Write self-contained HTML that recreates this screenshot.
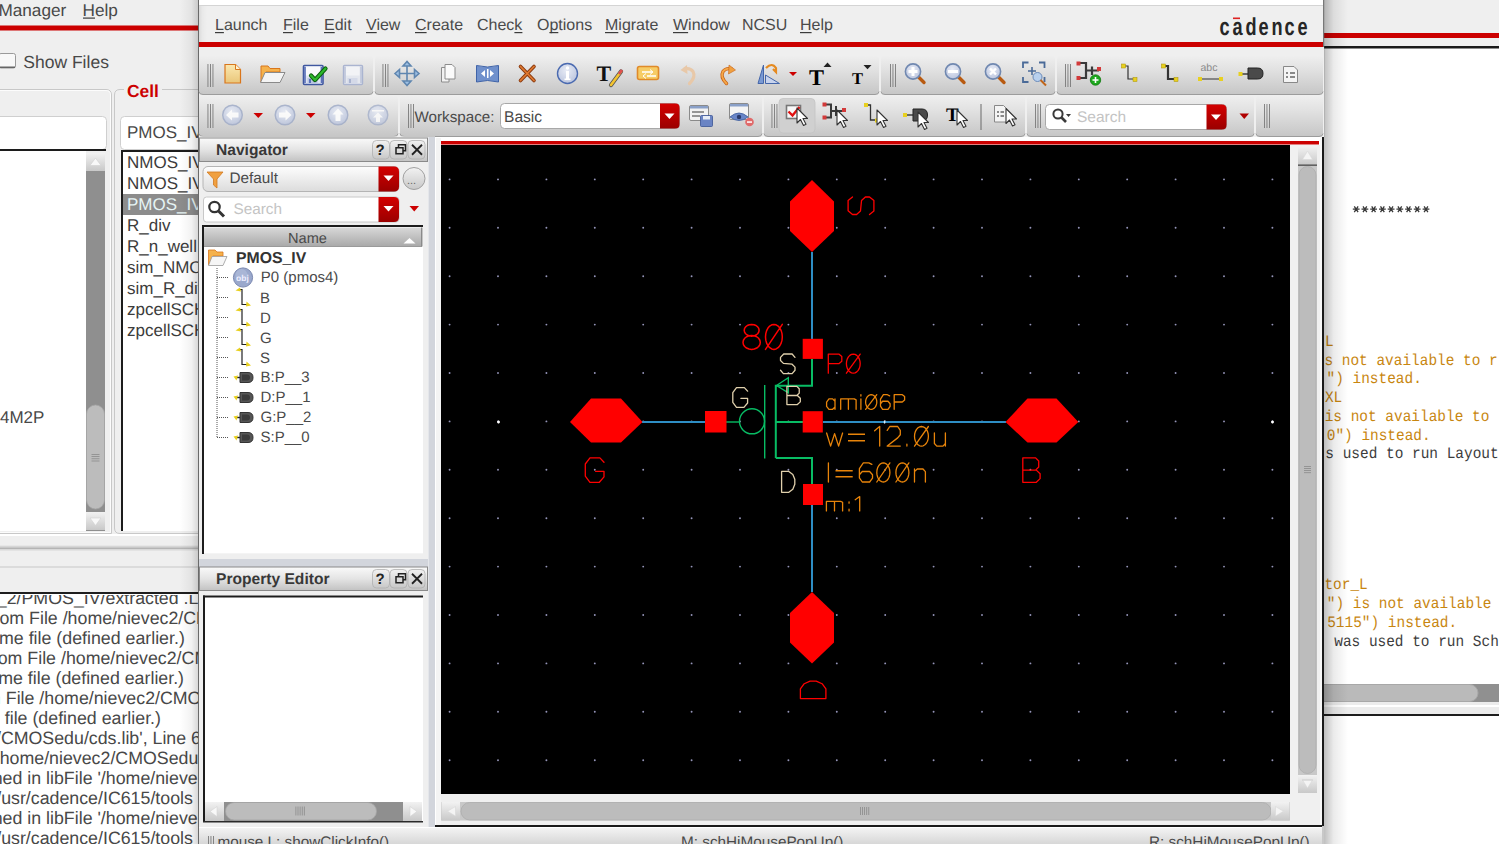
<!DOCTYPE html>
<html><head><meta charset="utf-8"><title>Virtuoso Schematic Editor</title>
<style>html,body{margin:0;padding:0;background:#efefef;overflow:hidden;width:1499px;height:844px}
svg{display:block}</style></head>
<body><svg width="1499" height="844" viewBox="0 0 1499 844" text-rendering="geometricPrecision">
<defs>
<linearGradient id="tb" x1="0" y1="0" x2="0" y2="1">
 <stop offset="0" stop-color="#efefef"/><stop offset="0.35" stop-color="#e2e2e2"/><stop offset="1" stop-color="#c6c6c6"/>
</linearGradient>
<linearGradient id="title" x1="0" y1="0" x2="0" y2="1">
 <stop offset="0" stop-color="#fafafa"/><stop offset="0.5" stop-color="#e4e4e4"/><stop offset="1" stop-color="#c2c2c2"/>
</linearGradient>
<linearGradient id="hdr" x1="0" y1="0" x2="0" y2="1">
 <stop offset="0" stop-color="#d8d8d8"/><stop offset="1" stop-color="#a9a9a9"/>
</linearGradient>
<linearGradient id="redbtn" x1="0" y1="0" x2="0" y2="1">
 <stop offset="0" stop-color="#d40000"/><stop offset="1" stop-color="#9a0000"/>
</linearGradient>
<linearGradient id="combo" x1="0" y1="0" x2="0" y2="1">
 <stop offset="0" stop-color="#fdfdfd"/><stop offset="1" stop-color="#dcdcdc"/>
</linearGradient>
<linearGradient id="status" x1="0" y1="0" x2="0" y2="1">
 <stop offset="0" stop-color="#f4f4f4"/><stop offset="1" stop-color="#d6d6d6"/>
</linearGradient>
<linearGradient id="shadowL" x1="0" y1="0" x2="1" y2="0">
 <stop offset="0" stop-color="#000" stop-opacity="0"/><stop offset="0.6" stop-color="#000" stop-opacity="0.05"/><stop offset="1" stop-color="#000" stop-opacity="0.17"/>
</linearGradient>
<linearGradient id="shadowR" x1="0" y1="0" x2="1" y2="0">
 <stop offset="0" stop-color="#000" stop-opacity="0.25"/><stop offset="0.4" stop-color="#000" stop-opacity="0.08"/><stop offset="1" stop-color="#000" stop-opacity="0"/>
</linearGradient>
<linearGradient id="btnv" x1="0" y1="0" x2="0" y2="1">
 <stop offset="0" stop-color="#f2f2f2"/><stop offset="1" stop-color="#c8c8c8"/>
</linearGradient>
<linearGradient id="thumbh" x1="0" y1="0" x2="0" y2="1">
 <stop offset="0" stop-color="#c4c4c4"/><stop offset="1" stop-color="#b4b4b4"/>
</linearGradient>
<radialGradient id="bluecirc" cx="0.45" cy="0.35" r="0.7">
 <stop offset="0" stop-color="#e8ecf6"/><stop offset="1" stop-color="#b8c2dc"/>
</radialGradient>
<linearGradient id="doc" x1="0" y1="0" x2="0" y2="1">
 <stop offset="0" stop-color="#fbe8b0"/><stop offset="1" stop-color="#e9c67a"/>
</linearGradient>
</defs>
<rect x="1324" y="0" width="175" height="844" fill="#ffffff" />
<rect x="1324" y="0" width="175" height="46" fill="#efefef" />
<rect x="1324" y="33" width="175" height="5" fill="#cc0000" />
<rect x="1324" y="46" width="175" height="2.5" fill="#1a1a1a" />
<path d="M1352.8 209.2 H1359.6 M1354.3 206.29999999999998 L1358.1 212.1 M1358.1 206.29999999999998 L1354.3 212.1 M1361.5 209.2 H1368.3 M1363.0 206.29999999999998 L1366.8 212.1 M1366.8 206.29999999999998 L1363.0 212.1 M1370.2 209.2 H1377.0 M1371.7 206.29999999999998 L1375.5 212.1 M1375.5 206.29999999999998 L1371.7 212.1 M1379.0 209.2 H1385.8 M1380.5 206.29999999999998 L1384.3 212.1 M1384.3 206.29999999999998 L1380.5 212.1 M1387.7 209.2 H1394.5 M1389.2 206.29999999999998 L1393.0 212.1 M1393.0 206.29999999999998 L1389.2 212.1 M1396.4 209.2 H1403.2 M1397.9 206.29999999999998 L1401.7 212.1 M1401.7 206.29999999999998 L1397.9 212.1 M1405.1 209.2 H1411.9 M1406.6 206.29999999999998 L1410.4 212.1 M1410.4 206.29999999999998 L1406.6 212.1 M1413.8 209.2 H1420.6 M1415.3 206.29999999999998 L1419.1 212.1 M1419.1 206.29999999999998 L1415.3 212.1 M1422.6 209.2 H1429.4 M1424.1 206.29999999999998 L1427.9 212.1 M1427.9 206.29999999999998 L1424.1 212.1" stroke="#3a3a3a" stroke-width="1.3"/>
<text transform="translate(1324.90 345.8) scale(1 1.1)" font-size="14.45" fill="#c8860f" font-family='"Liberation Mono", monospace'>L</text>
<text transform="translate(1324.46 364.6) scale(1 1.1)" font-size="14.45" fill="#c8860f" font-family='"Liberation Mono", monospace'>s not available to r</text>
<text transform="translate(1326.49 383.3) scale(1 1.1)" font-size="14.45" fill="#c8860f" font-family='"Liberation Mono", monospace'>") instead.</text>
<text transform="translate(1324.90 402) scale(1 1.1)" font-size="14.45" fill="#c8860f" font-family='"Liberation Mono", monospace'>XL</text>
<text transform="translate(1324.69 420.8) scale(1 1.1)" font-size="14.45" fill="#c8860f" font-family='"Liberation Mono", monospace'>is not available to</text>
<text transform="translate(1326.72 439.6) scale(1 1.1)" font-size="14.45" fill="#c8860f" font-family='"Liberation Mono", monospace'>0") instead.</text>
<text transform="translate(1325.36 458.4) scale(1 1.1)" font-size="14.45" fill="#3c3c3c" font-family='"Liberation Mono", monospace'>s used to run Layout</text>
<text transform="translate(1324.40 589.4) scale(1 1.1)" font-size="14.45" fill="#c8860f" font-family='"Liberation Mono", monospace'>tor_L</text>
<text transform="translate(1326.79 608.3) scale(1 1.1)" font-size="14.45" fill="#c8860f" font-family='"Liberation Mono", monospace'>") is not available</text>
<text transform="translate(1327.21 626.7) scale(1 1.1)" font-size="14.45" fill="#c8860f" font-family='"Liberation Mono", monospace'>5115") instead.</text>
<text transform="translate(1334.22 645.7) scale(1 1.1)" font-size="14.45" fill="#3c3c3c" font-family='"Liberation Mono", monospace'>was used to run Sch</text>
<rect x="1324" y="684" width="175" height="18" fill="#909090" />
<rect x="1310" y="684.5" width="168" height="17" rx="8.5" fill="#bababa" stroke="#a8a8a8" stroke-width="1"/>
<rect x="1324" y="702" width="175" height="12" fill="#ececec" />
<rect x="1324" y="705" width="175" height="2" fill="#ffffff" />
<rect x="1324" y="714" width="175" height="2" fill="#1e1e1e" />
<rect x="1324" y="716" width="175" height="128" fill="#ffffff" />
<rect x="1324" y="0" width="24" height="844" fill="url(#shadowR)"/>
<rect x="0" y="0" width="199" height="844" fill="#efefef" />
<text x="-1.6" y="16" font-size="17.2" fill="#484848" font-weight="normal" font-family='"Liberation Sans", sans-serif' >Manager</text>
<text x="82.5" y="16" font-size="17.2" fill="#484848" font-weight="normal" font-family='"Liberation Sans", sans-serif' >Help</text>
<rect x="83" y="17.5" width="12" height="1.2" fill="#3c3c3c" />
<rect x="0" y="25.5" width="199" height="5" fill="#cc0000" />
<rect x="-1" y="53.5" width="16.5" height="14.5" rx="2" fill="#f8f8f8" stroke="#9a9a9a" stroke-width="1"/>
<rect x="0" y="66.5" width="15" height="1.5" fill="#666" />
<text x="23.3" y="68" font-size="17.5" fill="#484848" font-weight="normal" font-family='"Liberation Sans", sans-serif' >Show Files</text>
<path d="M0 89.5 H106 Q111.5 89.5 111.5 95 V533.5 H0" fill="none" stroke="#c8c8c8" stroke-width="1"/>
<path d="M0 90.5 H106 Q110.5 90.5 110.5 95 V532.5 H0" fill="none" stroke="#ffffff" stroke-width="0.8"/>
<path d="M199 533.5 H120 Q114.5 533.5 114.5 528 V95 Q114.5 89.5 120 89.5 H124" fill="none" stroke="#c8c8c8" stroke-width="1"/>
<rect x="162" y="89" width="40" height="1" fill="#c8c8c8" />
<text x="127" y="96.5" font-size="17.4" fill="#cc0000" font-weight="bold" font-family='"Liberation Sans", sans-serif' >Cell</text>
<rect x="-10" y="116.5" width="116.5" height="33" rx="4" fill="#ffffff" stroke="#cfcfcf" stroke-width="1"/>
<rect x="0" y="149" width="106" height="2" fill="#1c1c1c" />
<rect x="0" y="151" width="86" height="380" fill="#ffffff" />
<rect x="86" y="153" width="19" height="378" fill="#8f8f8f" />
<rect x="86" y="153" width="19" height="18" fill="url(#btnv)"/>
<path d="M90 165.5 L95.5 158 L101 165.5 Z" fill="#f8f8f8" stroke="#d0d0d0" stroke-width="0.6"/>
<rect x="86.5" y="405" width="18" height="104" rx="9" fill="#bcbcbc" stroke="#a4a4a4" stroke-width="0.8"/>
<rect x="91.5" y="454.0" width="8" height="0.8" fill="#8a8a8a" />
<rect x="91.5" y="456.2" width="8" height="0.8" fill="#8a8a8a" />
<rect x="91.5" y="458.4" width="8" height="0.8" fill="#8a8a8a" />
<rect x="91.5" y="460.6" width="8" height="0.8" fill="#8a8a8a" />
<rect x="86" y="512" width="19" height="18" fill="url(#btnv)"/>
<path d="M90 518 L95.5 525.5 L101 518 Z" fill="#f8f8f8" stroke="#d0d0d0" stroke-width="0.6"/>
<text x="0" y="423" font-size="17" fill="#484848" font-weight="normal" font-family='"Liberation Sans", sans-serif' >4M2P</text>
<rect x="120.5" y="116.5" width="100" height="33" rx="4" fill="#ffffff" stroke="#cfcfcf" stroke-width="1"/>
<text x="127" y="137.5" font-size="17" fill="#484848" font-weight="normal" font-family='"Liberation Sans", sans-serif' >PMOS_IV</text>
<rect x="121" y="150" width="80" height="381" fill="#ffffff" />
<rect x="121" y="150" width="80" height="2" fill="#1c1c1c" />
<rect x="121" y="150" width="2" height="381" fill="#1c1c1c" />
<rect x="123" y="194" width="78" height="21" fill="#8c8c8c" />
<text x="127" y="167.5" font-size="17" fill="#3c3c3c" font-weight="normal" font-family='"Liberation Sans", sans-serif' >NMOS_IV</text>
<text x="127" y="188.5" font-size="17" fill="#3c3c3c" font-weight="normal" font-family='"Liberation Sans", sans-serif' >NMOS_IV</text>
<text x="127" y="209.5" font-size="17" fill="#e6f4f4" font-weight="normal" font-family='"Liberation Sans", sans-serif' >PMOS_IV</text>
<text x="127" y="230.5" font-size="17" fill="#3c3c3c" font-weight="normal" font-family='"Liberation Sans", sans-serif' >R_div</text>
<text x="127" y="251.5" font-size="17" fill="#3c3c3c" font-weight="normal" font-family='"Liberation Sans", sans-serif' >R_n_well</text>
<text x="127" y="272.5" font-size="17" fill="#3c3c3c" font-weight="normal" font-family='"Liberation Sans", sans-serif' >sim_NMOS</text>
<text x="127" y="293.5" font-size="17" fill="#3c3c3c" font-weight="normal" font-family='"Liberation Sans", sans-serif' >sim_R_div</text>
<text x="127" y="314.5" font-size="17" fill="#3c3c3c" font-weight="normal" font-family='"Liberation Sans", sans-serif' >zpcellSCH</text>
<text x="127" y="335.5" font-size="17" fill="#3c3c3c" font-weight="normal" font-family='"Liberation Sans", sans-serif' >zpcellSCH</text>
<rect x="0" y="534" width="199" height="2" fill="#ffffff" />
<rect x="0" y="545.5" width="199" height="1" fill="#e0e0e0" />
<rect x="0" y="546.5" width="199" height="1.2" fill="#c6c6c6" />
<rect x="0" y="547.7" width="199" height="1.6" fill="#b4b4b4" />
<rect x="0" y="549.3" width="199" height="1.2" fill="#d8d8d8" />
<rect x="0" y="566.5" width="199" height="1" fill="#c8c8c8" />
<rect x="0" y="592" width="199" height="2" fill="#1e1e1e" />
<rect x="0" y="594" width="199" height="250" fill="#ffffff" />
<clipPath id="logclip"><rect x="0" y="595" width="199" height="250"/></clipPath><g clip-path="url(#logclip)">
<text x="-13.1" y="604" font-size="17.8" fill="#484848" font-weight="normal" font-family='"Liberation Sans", sans-serif' >e_2/PMOS_IV/extracted .L</text>
<text x="-11.45" y="624" font-size="17.8" fill="#484848" font-weight="normal" font-family='"Liberation Sans", sans-serif' >from File /home/nievec2/CMOSedu</text>
<text x="-19.77" y="644" font-size="17.8" fill="#484848" font-weight="normal" font-family='"Liberation Sans", sans-serif' >same file (defined earlier.)</text>
<text x="-13.15" y="664" font-size="17.8" fill="#484848" font-weight="normal" font-family='"Liberation Sans", sans-serif' >from File /home/nievec2/CMOSedu</text>
<text x="-20.57" y="684" font-size="17.8" fill="#484848" font-weight="normal" font-family='"Liberation Sans", sans-serif' >same file (defined earlier.)</text>
<text x="-23.87" y="704" font-size="17.8" fill="#484848" font-weight="normal" font-family='"Liberation Sans", sans-serif' >om File /home/nievec2/CMOSedu</text>
<text x="-24.87" y="724" font-size="17.8" fill="#484848" font-weight="normal" font-family='"Liberation Sans", sans-serif' >me file (defined earlier.)</text>
<text x="-23.84" y="744" font-size="17.8" fill="#484848" font-weight="normal" font-family='"Liberation Sans", sans-serif' >du/CMOSedu/cds.lib', Line 6</text>
<text x="-5.25" y="764" font-size="17.8" fill="#484848" font-weight="normal" font-family='"Liberation Sans", sans-serif' >/home/nievec2/CMOSedu</text>
<text x="-26.1" y="784" font-size="17.8" fill="#484848" font-weight="normal" font-family='"Liberation Sans", sans-serif' >efined in libFile '/home/nievec2</text>
<text x="-3.82" y="804" font-size="17.8" fill="#484848" font-weight="normal" font-family='"Liberation Sans", sans-serif' >/usr/cadence/IC615/tools</text>
<text x="-26.1" y="824" font-size="17.8" fill="#484848" font-weight="normal" font-family='"Liberation Sans", sans-serif' >efined in libFile '/home/nievec2</text>
<text x="-3.82" y="844" font-size="17.8" fill="#484848" font-weight="normal" font-family='"Liberation Sans", sans-serif' >/usr/cadence/IC615/tools</text>
</g>
<rect x="180" y="0" width="19" height="844" fill="url(#shadowL)"/>
<rect x="198" y="0" width="1126" height="844" fill="#efefef" />
<rect x="198" y="0" width="1" height="844" fill="#6a6a6a" />
<rect x="199" y="0" width="1125" height="5" fill="#ffffff" />
<rect x="199" y="5" width="1125" height="1" fill="#d4d4d4" />
<rect x="199" y="6" width="8" height="36" fill="url(#shadowR)" opacity="0.35"/>
<text x="215" y="30.4" font-size="16" fill="#4a4a4a" font-weight="normal" font-family='"Liberation Sans", sans-serif' >Launch</text>
<rect x="215.0" y="32" width="8.9" height="1.2" fill="#3c3c3c" />
<text x="283" y="30.4" font-size="16" fill="#4a4a4a" font-weight="normal" font-family='"Liberation Sans", sans-serif' >File</text>
<rect x="283.0" y="32" width="9.8" height="1.2" fill="#3c3c3c" />
<text x="324" y="30.4" font-size="16" fill="#4a4a4a" font-weight="normal" font-family='"Liberation Sans", sans-serif' >Edit</text>
<rect x="324.0" y="32" width="10.7" height="1.2" fill="#3c3c3c" />
<text x="366" y="30.4" font-size="16" fill="#4a4a4a" font-weight="normal" font-family='"Liberation Sans", sans-serif' >View</text>
<rect x="366.0" y="32" width="10.7" height="1.2" fill="#3c3c3c" />
<text x="415" y="30.4" font-size="16" fill="#4a4a4a" font-weight="normal" font-family='"Liberation Sans", sans-serif' >Create</text>
<rect x="415.0" y="32" width="11.6" height="1.2" fill="#3c3c3c" />
<text x="477" y="30.4" font-size="16" fill="#4a4a4a" font-weight="normal" font-family='"Liberation Sans", sans-serif' >Check</text>
<rect x="514.4" y="32" width="8.0" height="1.2" fill="#3c3c3c" />
<text x="537" y="30.4" font-size="16" fill="#4a4a4a" font-weight="normal" font-family='"Liberation Sans", sans-serif' >Options</text>
<rect x="549.4" y="32" width="8.9" height="1.2" fill="#3c3c3c" />
<text x="605" y="30.4" font-size="16" fill="#4a4a4a" font-weight="normal" font-family='"Liberation Sans", sans-serif' >Migrate</text>
<rect x="605.0" y="32" width="13.3" height="1.2" fill="#3c3c3c" />
<text x="673" y="30.4" font-size="16" fill="#4a4a4a" font-weight="normal" font-family='"Liberation Sans", sans-serif' >Window</text>
<rect x="673.0" y="32" width="15.1" height="1.2" fill="#3c3c3c" />
<text x="742" y="30.4" font-size="16" fill="#4a4a4a" font-weight="normal" font-family='"Liberation Sans", sans-serif' >NCSU</text>
<text x="800" y="30.4" font-size="16" fill="#4a4a4a" font-weight="normal" font-family='"Liberation Sans", sans-serif' >Help</text>
<rect x="800.0" y="32" width="11.6" height="1.2" fill="#3c3c3c" />
<text x="1647.97 1665.54 1683.11 1700.68 1718.24 1735.81 1753.38" y="34.5" font-size="24.5" font-weight="bold" fill="#262626" font-family='"Liberation Sans", sans-serif' transform="scale(0.74 1)">cadence</text>
<rect x="1233" y="17.5" width="7" height="1.6" fill="#dd2222" />
<rect x="199" y="42" width="1125" height="5" fill="#cc0000" />
<rect x="1322" y="137" width="2" height="707" fill="#1a1a1a" />
<rect x="1323" y="0" width="1.2" height="137" fill="#787878" />
<rect x="199" y="47" width="1125" height="90" fill="#efefef" />
<rect x="199" y="55.5" width="174" height="39.0" rx="4" fill="url(#tb)"/>
<path d="M199 91.5 Q199 94.5 203 94.5 H369 Q373 94.5 373 91.5" fill="none" stroke="#9c9c9c" stroke-width="1"/>
<rect x="375" y="55.5" width="504" height="39.0" rx="4" fill="url(#tb)"/>
<path d="M375 91.5 Q375 94.5 379 94.5 H875 Q879 94.5 879 91.5" fill="none" stroke="#9c9c9c" stroke-width="1"/>
<rect x="881" y="55.5" width="174" height="39.0" rx="4" fill="url(#tb)"/>
<path d="M881 91.5 Q881 94.5 885 94.5 H1051 Q1055 94.5 1055 91.5" fill="none" stroke="#9c9c9c" stroke-width="1"/>
<rect x="1057" y="55.5" width="266" height="39.0" rx="4" fill="url(#tb)"/>
<path d="M1057 91.5 Q1057 94.5 1061 94.5 H1319 Q1323 94.5 1323 91.5" fill="none" stroke="#9c9c9c" stroke-width="1"/>
<rect x="207.5" y="64" width="0.9" height="23" fill="#7a7a7a" />
<rect x="210.0" y="64" width="0.9" height="23" fill="#7a7a7a" />
<rect x="212.5" y="64" width="0.9" height="23" fill="#7a7a7a" />
<rect x="382.5" y="64" width="0.9" height="23" fill="#7a7a7a" />
<rect x="385.0" y="64" width="0.9" height="23" fill="#7a7a7a" />
<rect x="387.5" y="64" width="0.9" height="23" fill="#7a7a7a" />
<rect x="890.0" y="64" width="0.9" height="23" fill="#7a7a7a" />
<rect x="892.5" y="64" width="0.9" height="23" fill="#7a7a7a" />
<rect x="895.0" y="64" width="0.9" height="23" fill="#7a7a7a" />
<rect x="1065.0" y="64" width="0.9" height="23" fill="#7a7a7a" />
<rect x="1067.5" y="64" width="0.9" height="23" fill="#7a7a7a" />
<rect x="1070.0" y="64" width="0.9" height="23" fill="#7a7a7a" />
<rect x="199" y="95.5" width="199" height="41.0" rx="4" fill="url(#tb)"/>
<path d="M199 133.5 Q199 136.5 203 136.5 H394 Q398 136.5 398 133.5" fill="none" stroke="#9c9c9c" stroke-width="1"/>
<rect x="400" y="95.5" width="362" height="41.0" rx="4" fill="url(#tb)"/>
<path d="M400 133.5 Q400 136.5 404 136.5 H758 Q762 136.5 762 133.5" fill="none" stroke="#9c9c9c" stroke-width="1"/>
<rect x="764" y="95.5" width="261" height="41.0" rx="4" fill="url(#tb)"/>
<path d="M764 133.5 Q764 136.5 768 136.5 H1021 Q1025 136.5 1025 133.5" fill="none" stroke="#9c9c9c" stroke-width="1"/>
<rect x="1027" y="95.5" width="227" height="41.0" rx="4" fill="url(#tb)"/>
<path d="M1027 133.5 Q1027 136.5 1031 136.5 H1250 Q1254 136.5 1254 133.5" fill="none" stroke="#9c9c9c" stroke-width="1"/>
<rect x="1256" y="95.5" width="67" height="41.0" rx="4" fill="url(#tb)"/>
<path d="M1256 133.5 Q1256 136.5 1260 136.5 H1319 Q1323 136.5 1323 133.5" fill="none" stroke="#9c9c9c" stroke-width="1"/>
<rect x="207.5" y="104" width="0.9" height="24" fill="#7a7a7a" />
<rect x="210.0" y="104" width="0.9" height="24" fill="#7a7a7a" />
<rect x="212.5" y="104" width="0.9" height="24" fill="#7a7a7a" />
<rect x="408.0" y="104" width="0.9" height="24" fill="#7a7a7a" />
<rect x="410.5" y="104" width="0.9" height="24" fill="#7a7a7a" />
<rect x="413.0" y="104" width="0.9" height="24" fill="#7a7a7a" />
<rect x="771.5" y="104" width="0.9" height="24" fill="#7a7a7a" />
<rect x="774.0" y="104" width="0.9" height="24" fill="#7a7a7a" />
<rect x="776.5" y="104" width="0.9" height="24" fill="#7a7a7a" />
<rect x="1035.0" y="104" width="0.9" height="24" fill="#7a7a7a" />
<rect x="1037.5" y="104" width="0.9" height="24" fill="#7a7a7a" />
<rect x="1040.0" y="104" width="0.9" height="24" fill="#7a7a7a" />
<rect x="1264.0" y="104" width="0.9" height="24" fill="#7a7a7a" />
<rect x="1266.5" y="104" width="0.9" height="24" fill="#7a7a7a" />
<rect x="1269.0" y="104" width="0.9" height="24" fill="#7a7a7a" />
<path d="M225 64.5 H235.5 L240.5 69.5 V83 H225 Z" fill="url(#doc)" stroke="#d9761c" stroke-width="1.2"/><path d="M235.5 64.5 V69.5 H240.5" fill="#fff3d0" stroke="#d9761c" stroke-width="1"/>
<path d="M261 66 H268 L270 68.5 H280 V72 H266 L261 82 Z" fill="#f5b24c" stroke="#d9761c" stroke-width="1"/><path d="M265 72.5 H285 L280 82.5 H260.5 Z" fill="#f4f4f4" stroke="#8a8a8a" stroke-width="1"/>
<rect x="303.5" y="65.5" width="19.5" height="19" rx="1" fill="#dfe4f2" stroke="#3f57a0" stroke-width="1.6"/><rect x="306" y="66.5" width="14" height="9" fill="#f8f9fc"/><path d="M305 67 V83 M321.5 67 V83" stroke="#5a70b8" stroke-width="1.6"/><rect x="307.5" y="78" width="10" height="6" fill="#b8c4e2"/><rect x="309" y="79" width="2" height="4" fill="#5a70b8"/>
<path d="M311 75.5 L315 80 L325.5 68.5" fill="none" stroke="#0a5a0a" stroke-width="4.2" stroke-linecap="round" stroke-linejoin="round"/><path d="M311 75.5 L315 80 L325.5 68.5" fill="none" stroke="#2cb82c" stroke-width="2.4" stroke-linecap="round" stroke-linejoin="round"/>
<rect x="343.5" y="65.5" width="19" height="19" rx="1" fill="#e4e7ee" stroke="#aab4d0" stroke-width="1.4"/><rect x="346" y="66.5" width="13.5" height="9" fill="#f2f3f6"/><path d="M345 67 V83 M361 67 V83" stroke="#b8c0d8" stroke-width="1.4"/><rect x="347.5" y="78" width="10" height="6" fill="#d4d9e8"/><rect x="349" y="79" width="2" height="4" fill="#aab4d0"/>
<g stroke="#5f86b0" stroke-width="1.6" fill="#9ec0e4"><path d="M407 63 V84 M396 73.5 H418" fill="none"/><path d="M407 61.5 L403 66 H411 Z"/><path d="M407 85.5 L403 81 H411 Z"/><path d="M395 73.5 L399.5 69.5 V77.5 Z"/><path d="M419 73.5 L414.5 69.5 V77.5 Z"/></g>
<path d="M441.5 67.5 H449 V82 H441.5 Z" fill="#f2f2f2" stroke="#8c8c8c" stroke-width="1"/><path d="M445 64.5 H452 L455 67.5 V79 H445 Z" fill="#fafafa" stroke="#8c8c8c" stroke-width="1"/>
<path d="M476.5 65.5 Q487.5 68.5 498.5 65.5 V82 Q487.5 79 476.5 82 Z" fill="#6f90cc" stroke="#3f63a8" stroke-width="1"/><path d="M481 73.5 L485 70 V77 Z M494 73.5 L490 70 V77 Z" fill="#fff"/><rect x="487" y="69" width="1.5" height="9" fill="#fff"/>
<path d="M520.5 66.5 L534 80.5 M534 66.5 L520.5 80.5" stroke="#8a3a10" stroke-width="3.6" stroke-linecap="round"/><path d="M520.5 66.5 L534 80.5 M534 66.5 L520.5 80.5" stroke="#e07a30" stroke-width="1.8" stroke-linecap="round"/>
<circle cx="567.5" cy="73.5" r="10" fill="url(#bluecirc)" stroke="#4a6ab0" stroke-width="1.4"/><rect x="566" y="71" width="3" height="8" fill="#fff"/><rect x="564.5" y="78.5" width="6" height="1.6" fill="#fff"/><circle cx="567.5" cy="68" r="1.7" fill="#fff"/>
<text x="596.5" y="80.5" font-size="22" fill="#111" font-weight="bold" font-family='"Liberation Serif", serif' >T</text>
<path d="M611 85 L621 71.5" stroke="#555" stroke-width="4.2" stroke-linecap="round"/><path d="M611 85 L621 71.5" stroke="#f4c430" stroke-width="2.6" stroke-linecap="round"/><path d="M619 74 L622 70" stroke="#e05050" stroke-width="2.6"/>
<rect x="637.5" y="66.5" width="21" height="13" rx="2" fill="#f6cc66" stroke="#e08a2a" stroke-width="1.6"/><path d="M642 72 H652 M647 76 H656" stroke="#fff" stroke-width="1.5"/><path d="M650 69.5 L653 72 L650 74.5 M646 73.5 L643 76 L646 78.5" fill="none" stroke="#fff" stroke-width="1"/>
<path d="M689.5 83.5 Q696 77 693 71.5 Q690 67.5 684.5 69" fill="none" stroke="#e8c8a8" stroke-width="3.2" stroke-linecap="round"/><path d="M680.5 70 L687 65 L687.5 74 Z" fill="#e8c8a8"/>
<path d="M726.5 83.5 Q720 77 723 71.5 Q726 67.5 731.5 69" fill="none" stroke="#c8641a" stroke-width="3.4" stroke-linecap="round"/><path d="M726.5 83.5 Q720 77 723 71.5 Q726 67.5 731.5 69" fill="none" stroke="#f6a848" stroke-width="1.8" stroke-linecap="round"/><path d="M735.5 70 L729 65 L728.5 74 Z" fill="#f0a040" stroke="#c8641a" stroke-width="0.6"/>
<path d="M758 83.5 L763.5 65 V83.5 Z" fill="#7a9ad4" stroke="#4466aa" stroke-width="1"/><path d="M765.5 75 V83.5 H779.5 Z" fill="#c8d4ee" stroke="#4466aa" stroke-width="1"/><path d="M766 68 Q772 62 776 68 V72 L773 69" fill="none" stroke="#e58a20" stroke-width="2.2"/>
<path d="M789 72 H797 L793 76 Z" fill="#cc0000"/>
<text x="809" y="84.5" font-size="22.5" fill="#000" font-weight="bold" font-family='"Liberation Serif", serif' >T</text>
<path d="M827.5 62.5 L831.5 67 H823.5 Z" fill="#222"/>
<text x="852" y="84" font-size="16.5" fill="#000" font-weight="bold" font-family='"Liberation Serif", serif' >T</text>
<path d="M863.5 65 L871.5 65 L867.5 69.3 Z" fill="#222"/>
<path d="M918 76.5 L924 82.5" stroke="#b85a10" stroke-width="3.4" stroke-linecap="round"/>
<circle cx="913" cy="71.5" r="7.6" fill="url(#bluecirc)" stroke="#7088b0" stroke-width="1.6"/>
<path d="M913 67 V76 M908.5 71.5 H917.5" stroke="#fff" stroke-width="3"/>
<path d="M958 76.5 L964 82.5" stroke="#b85a10" stroke-width="3.4" stroke-linecap="round"/>
<circle cx="953" cy="71.5" r="7.6" fill="url(#bluecirc)" stroke="#7088b0" stroke-width="1.6"/>
<path d="M948 71.5 H958" stroke="#fff" stroke-width="3"/>
<path d="M998 76.5 L1004 82.5" stroke="#b85a10" stroke-width="3.4" stroke-linecap="round"/>
<circle cx="993" cy="71.5" r="7.6" fill="url(#bluecirc)" stroke="#7088b0" stroke-width="1.6"/>
<path d="M990 68.5 L996 74.5 M996 68.5 L990 74.5" stroke="#fff" stroke-width="2.4"/>
<path d="M1023 68 V62.5 H1028.5 M1039 62.5 H1044.5 V68 M1044.5 77 V82 M1028.5 82 H1023 V77" fill="none" stroke="#4a6a98" stroke-width="1.8"/><path d="M1032 67 V75 M1028 71 H1036" stroke="#4a6a98" stroke-width="1.6"/><circle cx="1037.5" cy="77" r="4.5" fill="#b8d0ee" stroke="#6a8ab8" stroke-width="1"/><path d="M1040.5 80 L1046 85.5" stroke="#c0651a" stroke-width="2"/>
<path d="M1078.5 63 H1086 V70.5 M1078.5 78 H1086 V70.5 H1092 M1092 66.5 V75 M1092 70.5 H1099" fill="none" stroke="#3a3a3a" stroke-width="2.2"/><rect x="1076.5" y="61.5" width="4" height="4" fill="#d23a3a"/><rect x="1076.5" y="76" width="4" height="4" fill="#d23a3a"/><rect x="1097" y="67" width="4" height="4" fill="#d23a3a"/><circle cx="1095.5" cy="80" r="5.2" fill="#1ea81e" stroke="#0f7a0f" stroke-width="0.8"/><path d="M1095.5 77 V83 M1092.5 80 H1098.5" stroke="#fff" stroke-width="1.6"/>
<path d="M1124.5 66 H1128 V79 H1134.5" fill="none" stroke="#333" stroke-width="1.2"/><rect x="1121.5" y="64" width="4" height="4" fill="#e8d020" stroke="#a89000" stroke-width="0.5"/><rect x="1133" y="77.5" width="4" height="4" fill="#e8d020" stroke="#a89000" stroke-width="0.5"/>
<path d="M1164.5 66 H1168 V79 H1175" fill="none" stroke="#333" stroke-width="2.2"/><rect x="1161.5" y="64" width="4" height="4" fill="#e8d020" stroke="#a89000" stroke-width="0.5"/><rect x="1174" y="77.5" width="4" height="4" fill="#e8d020" stroke="#a89000" stroke-width="0.5"/>
<text x="1200.5" y="70.5" font-size="10.5" fill="#8a8a8a" font-weight="normal" font-family='"Liberation Sans", sans-serif' >abc</text>
<path d="M1200 79 H1221" stroke="#333" stroke-width="1"/><rect x="1198" y="77" width="4" height="4" fill="#e8d020"/><rect x="1219" y="77" width="4" height="4" fill="#e8d020"/>
<path d="M1241 74 H1248" stroke="#333" stroke-width="1.4"/><rect x="1238.5" y="72" width="4" height="4" fill="#e8d020"/><path d="M1248 68 H1257.5 Q1263 68 1263 73.5 Q1263 79 1257.5 79 H1248 Z" fill="#4a4a4a" stroke="#222" stroke-width="1"/>
<path d="M1283.5 66.5 H1294 L1297.5 70 V82.5 H1283.5 Z" fill="#f4f4f4" stroke="#888" stroke-width="1"/><path d="M1286 73 H1288 M1290 73 H1295 M1286 77 H1288 M1290 77 H1295" stroke="#666" stroke-width="1.6"/>
<g opacity="0.85"><circle cx="232.5" cy="115" r="9.8" fill="url(#bluecirc)" stroke="#a0acc8" stroke-width="1.4"/><path d="M226 115 L232 109.5 V112.5 H238.5 V117.5 H232 V120.5 Z" fill="#fff"/></g>
<path d="M253.5 113 H263 L258.25 118 Z" fill="#cc0000"/>
<g opacity="0.85"><circle cx="285" cy="115" r="9.8" fill="url(#bluecirc)" stroke="#a0acc8" stroke-width="1.4"/><path d="M291.5 115 L285.5 109.5 V112.5 H279 V117.5 H285.5 V120.5 Z" fill="#fff"/></g>
<path d="M306 113 H315.5 L310.75 118 Z" fill="#cc0000"/>
<g opacity="0.85"><circle cx="338" cy="115" r="9.8" fill="url(#bluecirc)" stroke="#a0acc8" stroke-width="1.4"/><path d="M338 108.5 L332.5 114.5 H335.5 V121 H340.5 V114.5 H343.5 Z" fill="#fff"/></g>
<g opacity="0.75"><circle cx="378" cy="115" r="9.8" fill="url(#bluecirc)" stroke="#a0acc8" stroke-width="1.4"/><path d="M372 110 H384 V111.5 H372 Z M378 112.5 L373 117.5 H376 V122 H380 V117.5 H383 Z" fill="#fff"/></g>
<text x="414.5" y="121.5" font-size="15.2" fill="#4a4a4a" font-weight="normal" font-family='"Liberation Sans", sans-serif' >Workspace:</text>
<rect x="500.5" y="103.5" width="179" height="25" rx="4" fill="#ffffff" stroke="#a8a8a8" stroke-width="1"/>
<path d="M660 103.5 H675.5 Q679.5 103.5 679.5 107.5 V124.5 Q679.5 128.5 675.5 128.5 H660 Z" fill="url(#redbtn)"/><path d="M664.5 113.5 H674.5 L669.5 119 Z" fill="#fff"/>
<text x="504" y="121.5" font-size="15.6" fill="#4a4a4a" font-weight="normal" font-family='"Liberation Sans", sans-serif' >Basic</text>
<rect x="689.5" y="105.5" width="19" height="15" rx="1.5" fill="#f2f2f2" stroke="#8a8a8a" stroke-width="1"/><rect x="690" y="106" width="18" height="2.5" fill="#8aa0c8"/><path d="M692 112 H704 M692 116 H700" stroke="#777" stroke-width="1.3"/><rect x="700.5" y="115.5" width="12" height="11" rx="1" fill="#6a84c4" stroke="#3a5494" stroke-width="0.8"/><rect x="703" y="116" width="7" height="3.5" fill="#e6ecf6"/>
<rect x="729.5" y="103.5" width="19" height="16" rx="1.5" fill="#f4f4f4" stroke="#8a8a8a" stroke-width="1"/><rect x="730" y="104" width="18" height="2.5" fill="#8aa0c8"/><path d="M730 117 Q739 109 748 117 Q739 124 730 117 Z" fill="#6a86c8" stroke="#3a5a9a" stroke-width="0.8"/><circle cx="739" cy="117" r="2.2" fill="#2a3a6a"/><circle cx="749.5" cy="122" r="4.3" fill="#e06a6a"/><rect x="747" y="121.3" width="5" height="1.5" fill="#fff"/>
<rect x="779" y="98.5" width="36" height="34.5" rx="4" fill="#d0d0d0" stroke="#c4c4c4" stroke-width="0.8"/>
<rect x="786.5" y="105.5" width="14" height="13" fill="#f8f8f8" stroke="#777" stroke-width="1.6"/><path d="M788.5 111.5 L792.5 115.5 L799.5 107" fill="none" stroke="#e01010" stroke-width="2.4"/>
<path d="M797 108 V123 L800.5 119.5 L803.5 125.5 L806 124.3 L803 118.5 H807.5 Z" fill="#fff" stroke="#333" stroke-width="1.1" stroke-linejoin="round"/>
<path d="M824.5 104.5 H831 V111 M824.5 117.5 H831 V111 H838 M836 106 V116 M838 111 H843" fill="none" stroke="#3a3a3a" stroke-width="2"/><rect x="822.5" y="102.5" width="4" height="4" fill="#d23a3a"/><rect x="822.5" y="115.5" width="4" height="4" fill="#d23a3a"/><rect x="842" y="108" width="4" height="4" fill="#d23a3a"/>
<path d="M837 110 V125 L840.5 121.5 L843.5 127.5 L846 126.3 L843 120.5 H847.5 Z" fill="#fff" stroke="#333" stroke-width="1.1" stroke-linejoin="round"/>
<path d="M867 105 H870.5 V120 H876" fill="none" stroke="#333" stroke-width="1.3"/><rect x="864" y="103" width="4" height="4" fill="#e8d020"/><rect x="875" y="118.5" width="4" height="4" fill="#e8d020"/>
<path d="M877 110 V125 L880.5 121.5 L883.5 127.5 L886 126.3 L883 120.5 H887.5 Z" fill="#fff" stroke="#333" stroke-width="1.1" stroke-linejoin="round"/>
<path d="M905 115 H913" stroke="#333" stroke-width="1.4"/><rect x="903" y="113" width="4" height="4" fill="#e8d020"/><path d="M913 109 H922 Q927.5 109 927.5 115 Q927.5 121 922 121 H913 Z" fill="#4a4a4a" stroke="#222" stroke-width="1"/>
<path d="M918 112 V127 L921.5 123.5 L924.5 129.5 L927 128.3 L924 122.5 H928.5 Z" fill="#fff" stroke="#333" stroke-width="1.1" stroke-linejoin="round"/>
<text x="946" y="121" font-size="19" fill="#000" font-weight="bold" font-family='"Liberation Serif", serif' >T</text>
<path d="M957 110 V125 L960.5 121.5 L963.5 127.5 L966 126.3 L963 120.5 H967.5 Z" fill="#fff" stroke="#333" stroke-width="1.1" stroke-linejoin="round"/>
<rect x="980.5" y="104" width="1" height="26" fill="#6a6a6a" />
<path d="M994.5 105.5 H1003.5 L1006.5 108.5 V122 H994.5 Z" fill="#f4f4f4" stroke="#888" stroke-width="1"/><path d="M997 112 H999 M1000.5 112 H1004 M997 116 H999 M1000.5 116 H1004" stroke="#666" stroke-width="1.5"/>
<path d="M1006 108.5 V123.5 L1009.5 120.0 L1012.5 126.0 L1015 124.8 L1012 119.0 H1016.5 Z" fill="#fff" stroke="#333" stroke-width="1.1" stroke-linejoin="round"/>
<rect x="1045.5" y="104.5" width="181" height="25" rx="4" fill="#ffffff" stroke="#a8a8a8" stroke-width="1"/>
<path d="M1206.5 104.5 H1222 Q1226.5 104.5 1226.5 109 V125 Q1226.5 129.5 1222 129.5 H1206.5 Z" fill="url(#redbtn)"/><path d="M1211 114.5 H1221 L1216 120 Z" fill="#fff"/>
<circle cx="1058" cy="114" r="4.6" fill="none" stroke="#3a3a3a" stroke-width="2"/><path d="M1061.5 117.5 L1066 122" stroke="#3a3a3a" stroke-width="2.6"/><path d="M1066 114 H1071 L1068.5 117 Z" fill="#3a3a3a"/>
<text x="1077" y="122" font-size="15.5" fill="#c4c4c4" font-weight="normal" font-family='"Liberation Sans", sans-serif' >Search</text>
<path d="M1239.5 113.5 H1249 L1244.25 119 Z" fill="#b00000"/>
<rect x="199" y="136.5" width="236" height="690.5" fill="#efefef" />
<rect x="428" y="137" width="7" height="690" fill="#d2d5dc" />
<rect x="428" y="137" width="1" height="690" fill="#e4e6ea" />
<rect x="199.5" y="138" width="228" height="23.5" fill="url(#title)" stroke="#8a8a8a" stroke-width="1"/>
<text x="216" y="154.9" font-size="15.6" fill="#383838" font-weight="bold" font-family='"Liberation Sans", sans-serif' >Navigator</text>
<rect x="372.5" y="140.5" width="17" height="18.5" rx="4" fill="url(#btnv)" stroke="#b0b0b0" stroke-width="0.8"/>
<rect x="390" y="140.5" width="17" height="18.5" rx="4" fill="url(#btnv)" stroke="#b0b0b0" stroke-width="0.8"/>
<rect x="408" y="140.5" width="17" height="18.5" rx="4" fill="url(#btnv)" stroke="#b0b0b0" stroke-width="0.8"/>
<text x="375.5" y="155.25" font-size="15" fill="#222" font-weight="bold" font-family='"Liberation Sans", sans-serif' >?</text>
<rect x="396" y="147.75" width="7" height="6" fill="none" stroke="#222" stroke-width="1.5"/><path d="M398.5 147.75 V144.75 H405.5 V150.75 H403" fill="none" stroke="#222" stroke-width="1.5"/>
<path d="M412 144.75 L422 154.75 M422 144.75 L412 154.75" stroke="#222" stroke-width="1.8"/>
<rect x="203" y="166.5" width="196" height="25" rx="5" fill="url(#combo)" stroke="#b4b4b4" stroke-width="1"/>
<path d="M378.5 166.5 H394 Q399 166.5 399 171.5 V186.5 Q399 191.5 394 191.5 H378.5 Z" fill="url(#redbtn)"/><path d="M383.5 175.5 H393.5 L388.5 181 Z" fill="#fff"/>
<path d="M207 172 H223 L217 179 V188 L213.5 185 V179 Z" fill="#f0a040" stroke="#d07820" stroke-width="0.8"/>
<text x="229.5" y="183.4" font-size="15.3" fill="#4a4a4a" font-weight="normal" font-family='"Liberation Sans", sans-serif' >Default</text>
<circle cx="414" cy="178.5" r="11" fill="url(#btnv)" stroke="#a0a0a0" stroke-width="1"/>
<text x="407" y="184" font-size="11" fill="#666" font-weight="normal" font-family='"Liberation Sans", sans-serif' >...</text>
<rect x="203.5" y="197" width="195.5" height="25" rx="3" fill="#ffffff" stroke="#c8c8c8" stroke-width="1"/>
<path d="M378.5 197 H394 Q399 197 399 202 V217 Q399 222 394 222 H378.5 Z" fill="url(#redbtn)"/><path d="M383.5 206 H393.5 L388.5 211.5 Z" fill="#fff"/>
<circle cx="214.5" cy="207" r="5.2" fill="none" stroke="#333" stroke-width="2.2"/><path d="M218.5 211 L224 216.5" stroke="#333" stroke-width="3"/>
<text x="233.5" y="214.2" font-size="15.3" fill="#c4c4c4" font-weight="normal" font-family='"Liberation Sans", sans-serif' >Search</text>
<path d="M409.5 206 H419 L414.25 211.5 Z" fill="#cc0000"/>
<rect x="202" y="225" width="221" height="334" fill="#ffffff" />
<rect x="202" y="225" width="221" height="2" fill="#1c1c1c" />
<rect x="202" y="225" width="2" height="330" fill="#1c1c1c" />
<rect x="204" y="227.5" width="218" height="19" fill="url(#hdr)"/>
<rect x="204" y="246" width="218" height="1" fill="#9a9a9a" />
<rect x="421" y="227.5" width="1.5" height="19" fill="#8a8a8a" />
<text x="288" y="242.5" font-size="14.6" fill="#4a4a4a" font-weight="normal" font-family='"Liberation Sans", sans-serif' >Name</text>
<path d="M403.5 243.5 L409.5 238 L415.5 243.5 Z" fill="#fff"/>
<path d="M208.5 250 H215 L217 252 H223 V256 H213 L208.5 265 Z" fill="#f5b24c" stroke="#d9761c" stroke-width="0.8"/><path d="M212 256.5 H227 L223 265.5 H208.5 Z" fill="#f6f6f6" stroke="#9a9a9a" stroke-width="0.8"/>
<text x="236" y="262.5" font-size="15.8" fill="#333" font-weight="bold" font-family='"Liberation Sans", sans-serif' >PMOS_IV</text>
<path d="M217 268 V437.5" stroke="#555" stroke-width="1" stroke-dasharray="1 1"/>
<path d="M217 277.5 H229" stroke="#555" stroke-width="1" stroke-dasharray="1 1"/>
<path d="M217 297.5 H229" stroke="#555" stroke-width="1" stroke-dasharray="1 1"/>
<path d="M217 317.5 H229" stroke="#555" stroke-width="1" stroke-dasharray="1 1"/>
<path d="M217 337.5 H229" stroke="#555" stroke-width="1" stroke-dasharray="1 1"/>
<path d="M217 357.5 H229" stroke="#555" stroke-width="1" stroke-dasharray="1 1"/>
<path d="M217 377.5 H229" stroke="#555" stroke-width="1" stroke-dasharray="1 1"/>
<path d="M217 397.5 H229" stroke="#555" stroke-width="1" stroke-dasharray="1 1"/>
<path d="M217 417.5 H229" stroke="#555" stroke-width="1" stroke-dasharray="1 1"/>
<path d="M217 437.5 H229" stroke="#555" stroke-width="1" stroke-dasharray="1 1"/>
<circle cx="243" cy="277.5" r="9.6" fill="#9aa8cc" stroke="#7a88b0" stroke-width="1"/><circle cx="241.5" cy="275" r="6" fill="#b4c0dc" opacity="0.6"/>
<text x="236" y="280.5" font-size="8.5" fill="#eef" font-weight="bold" font-family='"Liberation Sans", sans-serif' >obj</text>
<text x="260.8" y="282" font-size="15" fill="#4a4a4a" font-weight="normal" font-family='"Liberation Sans", sans-serif' >P0 (pmos4)</text>
<path d="M238 289.5 H242 V304.5 H248" fill="none" stroke="#222" stroke-width="1.2"/><path d="M235.5 290.5 L240 287.5 L241 291.5 Z" fill="#e8d020"/><path d="M246.5 301.5 L251 305.5 L246 306.5 Z" fill="#e8d020"/>
<text x="260" y="302.5" font-size="15" fill="#4a4a4a" font-weight="normal" font-family='"Liberation Sans", sans-serif' >B</text>
<path d="M238 309.5 H242 V324.5 H248" fill="none" stroke="#222" stroke-width="1.2"/><path d="M235.5 310.5 L240 307.5 L241 311.5 Z" fill="#e8d020"/><path d="M246.5 321.5 L251 325.5 L246 326.5 Z" fill="#e8d020"/>
<text x="260" y="322.5" font-size="15" fill="#4a4a4a" font-weight="normal" font-family='"Liberation Sans", sans-serif' >D</text>
<path d="M238 329.5 H242 V344.5 H248" fill="none" stroke="#222" stroke-width="1.2"/><path d="M235.5 330.5 L240 327.5 L241 331.5 Z" fill="#e8d020"/><path d="M246.5 341.5 L251 345.5 L246 346.5 Z" fill="#e8d020"/>
<text x="260" y="342.5" font-size="15" fill="#4a4a4a" font-weight="normal" font-family='"Liberation Sans", sans-serif' >G</text>
<path d="M238 349.5 H242 V364.5 H248" fill="none" stroke="#222" stroke-width="1.2"/><path d="M235.5 350.5 L240 347.5 L241 351.5 Z" fill="#e8d020"/><path d="M246.5 361.5 L251 365.5 L246 366.5 Z" fill="#e8d020"/>
<text x="260" y="362.5" font-size="15" fill="#4a4a4a" font-weight="normal" font-family='"Liberation Sans", sans-serif' >S</text>
<path d="M236 377.5 H241" stroke="#222" stroke-width="1.4"/><path d="M233.5 376.5 L238 375.5 L236.5 380.5 Z" fill="#e8d020"/><path d="M240 372.5 H248 Q253 372.5 253 377.5 Q253 382.5 248 382.5 H240 Z" fill="#555" stroke="#333" stroke-width="1"/><path d="M242 374.5 H247 Q250 374.5 250 377.5 Q250 380.5 247 380.5 H242 Z" fill="#3a3a3a"/>
<text x="260.5" y="382.3" font-size="15" fill="#4a4a4a" font-weight="normal" font-family='"Liberation Sans", sans-serif' >B:P__3</text>
<path d="M236 397.5 H241" stroke="#222" stroke-width="1.4"/><path d="M233.5 396.5 L238 395.5 L236.5 400.5 Z" fill="#e8d020"/><path d="M240 392.5 H248 Q253 392.5 253 397.5 Q253 402.5 248 402.5 H240 Z" fill="#555" stroke="#333" stroke-width="1"/><path d="M242 394.5 H247 Q250 394.5 250 397.5 Q250 400.5 247 400.5 H242 Z" fill="#3a3a3a"/>
<text x="260.5" y="402.3" font-size="15" fill="#4a4a4a" font-weight="normal" font-family='"Liberation Sans", sans-serif' >D:P__1</text>
<path d="M236 417.5 H241" stroke="#222" stroke-width="1.4"/><path d="M233.5 416.5 L238 415.5 L236.5 420.5 Z" fill="#e8d020"/><path d="M240 412.5 H248 Q253 412.5 253 417.5 Q253 422.5 248 422.5 H240 Z" fill="#555" stroke="#333" stroke-width="1"/><path d="M242 414.5 H247 Q250 414.5 250 417.5 Q250 420.5 247 420.5 H242 Z" fill="#3a3a3a"/>
<text x="260.5" y="422.3" font-size="15" fill="#4a4a4a" font-weight="normal" font-family='"Liberation Sans", sans-serif' >G:P__2</text>
<path d="M236 437.5 H241" stroke="#222" stroke-width="1.4"/><path d="M233.5 436.5 L238 435.5 L236.5 440.5 Z" fill="#e8d020"/><path d="M240 432.5 H248 Q253 432.5 253 437.5 Q253 442.5 248 442.5 H240 Z" fill="#555" stroke="#333" stroke-width="1"/><path d="M242 434.5 H247 Q250 434.5 250 437.5 Q250 440.5 247 440.5 H242 Z" fill="#3a3a3a"/>
<text x="260.5" y="442.3" font-size="15" fill="#4a4a4a" font-weight="normal" font-family='"Liberation Sans", sans-serif' >S:P__0</text>
<rect x="202" y="554" width="221" height="5" fill="#efefef" />
<rect x="204" y="553" width="219" height="1" fill="#f4f4f4" />
<rect x="199" y="559" width="229" height="8" fill="#d2d5dc" />
<rect x="199.5" y="567" width="228" height="23.5" fill="url(#title)" stroke="#8a8a8a" stroke-width="1"/>
<text x="216" y="583.9" font-size="15.6" fill="#383838" font-weight="bold" font-family='"Liberation Sans", sans-serif' >Property Editor</text>
<rect x="372.5" y="569.5" width="17" height="18.5" rx="4" fill="url(#btnv)" stroke="#b0b0b0" stroke-width="0.8"/>
<rect x="390" y="569.5" width="17" height="18.5" rx="4" fill="url(#btnv)" stroke="#b0b0b0" stroke-width="0.8"/>
<rect x="408" y="569.5" width="17" height="18.5" rx="4" fill="url(#btnv)" stroke="#b0b0b0" stroke-width="0.8"/>
<text x="375.5" y="584.25" font-size="15" fill="#222" font-weight="bold" font-family='"Liberation Sans", sans-serif' >?</text>
<rect x="396" y="576.75" width="7" height="6" fill="none" stroke="#222" stroke-width="1.5"/><path d="M398.5 576.75 V573.75 H405.5 V579.75 H403" fill="none" stroke="#222" stroke-width="1.5"/>
<path d="M412 573.75 L422 583.75 M422 573.75 L412 583.75" stroke="#222" stroke-width="1.8"/>
<rect x="202" y="594" width="221" height="233" fill="#efefef" />
<rect x="203" y="595.5" width="220" height="226" fill="#ffffff" />
<rect x="203" y="595.5" width="220" height="2" fill="#1c1c1c" />
<rect x="203" y="595.5" width="2" height="226" fill="#1c1c1c" />
<rect x="205" y="802" width="217" height="19" fill="#8f8f8f" />
<rect x="205" y="802" width="19" height="19" fill="url(#btnv)"/><path d="M217 806.5 L210 811.5 L217 816.5 Z" fill="#f8f8f8" stroke="#d4d4d4" stroke-width="0.6"/>
<rect x="225.5" y="802.5" width="151" height="17.5" rx="8.7" fill="#bcbcbc" stroke="#a4a4a4" stroke-width="0.8"/>
<rect x="295.5" y="806.5" width="0.8" height="9" fill="#8a8a8a" />
<rect x="297.6" y="806.5" width="0.8" height="9" fill="#8a8a8a" />
<rect x="299.7" y="806.5" width="0.8" height="9" fill="#8a8a8a" />
<rect x="301.8" y="806.5" width="0.8" height="9" fill="#8a8a8a" />
<rect x="303.9" y="806.5" width="0.8" height="9" fill="#8a8a8a" />
<rect x="403" y="802" width="19" height="19" fill="url(#btnv)"/><path d="M410 806.5 L417 811.5 L410 816.5 Z" fill="#f8f8f8" stroke="#d4d4d4" stroke-width="0.6"/>
<rect x="203" y="821" width="220" height="1.5" fill="#2a2a2a" />
<rect x="435" y="137" width="889" height="690" fill="#efefef" />
<rect x="435" y="137" width="887" height="689" fill="#ffffff" />
<rect x="436" y="138" width="5" height="687" fill="#f4f4f4" />
<rect x="441" y="141" width="878" height="3.5" fill="#cc0000" />
<rect x="441" y="145" width="849" height="649" fill="#000000" />
<rect x="1290" y="145" width="32" height="681" fill="#f0f0f0" />
<rect x="441" y="794" width="881" height="32" fill="#f0f0f0" />
<rect x="1320" y="137" width="2" height="689" fill="#f8f8f8" />
<rect x="1322" y="137" width="2" height="690" fill="#1a1a1a" />
<rect x="435" y="825" width="889" height="2" fill="#1a1a1a" />
<rect x="1298" y="146" width="19" height="647" fill="#c8c8c8" />
<rect x="1298" y="146" width="19" height="19" fill="url(#btnv)"/><path d="M1302.5 159.5 L1307.5 151 L1312.5 159.5 Z" fill="#f4f4f4" stroke="#d8d8d8" stroke-width="0.6"/>
<rect x="1298" y="164.5" width="19" height="1.3" fill="#4a4a4a" />
<rect x="1299" y="166.5" width="17" height="607" rx="8.5" fill="#bcbcbc" stroke="#adadad" stroke-width="0.8"/>
<rect x="1304" y="466.0" width="7" height="0.8" fill="#8a8a8a" />
<rect x="1304" y="468.1" width="7" height="0.8" fill="#8a8a8a" />
<rect x="1304" y="470.2" width="7" height="0.8" fill="#8a8a8a" />
<rect x="1304" y="472.3" width="7" height="0.8" fill="#8a8a8a" />
<rect x="1298" y="775" width="19" height="18" fill="url(#btnv)"/><path d="M1302.5 780 L1307.5 788 L1312.5 780 Z" fill="#f4f4f4" stroke="#d8d8d8" stroke-width="0.6"/>
<rect x="1302" y="779.5" width="11" height="1" fill="#cfcfcf" />
<rect x="441" y="802" width="849" height="18.5" fill="#c8c8c8" />
<rect x="441.5" y="802" width="18.5" height="18.5" fill="url(#btnv)"/><path d="M455.5 806.5 L447.5 811.25 L455.5 816 Z" fill="#f4f4f4" stroke="#d8d8d8" stroke-width="0.6"/>
<rect x="461" y="802.5" width="810" height="17.5" rx="8.7" fill="#bcbcbc" stroke="#adadad" stroke-width="0.8"/>
<rect x="860.0" y="807" width="0.8" height="8" fill="#8a8a8a" />
<rect x="862.1" y="807" width="0.8" height="8" fill="#8a8a8a" />
<rect x="864.2" y="807" width="0.8" height="8" fill="#8a8a8a" />
<rect x="866.3" y="807" width="0.8" height="8" fill="#8a8a8a" />
<rect x="868.4" y="807" width="0.8" height="8" fill="#8a8a8a" />
<rect x="1271" y="802" width="18.5" height="18.5" fill="url(#btnv)"/><path d="M1275.5 806.5 L1283.5 811.25 L1275.5 816 Z" fill="#f4f4f4" stroke="#d8d8d8" stroke-width="0.6"/>
<circle cx="449.6" cy="179.4" r="0.95" fill="#9494b8"/>
<circle cx="449.6" cy="227.8" r="0.95" fill="#9494b8"/>
<circle cx="449.6" cy="276.2" r="0.95" fill="#9494b8"/>
<circle cx="449.6" cy="324.6" r="0.95" fill="#9494b8"/>
<circle cx="449.6" cy="373.0" r="0.95" fill="#9494b8"/>
<circle cx="449.6" cy="421.4" r="0.95" fill="#9494b8"/>
<circle cx="449.6" cy="469.8" r="0.95" fill="#9494b8"/>
<circle cx="449.6" cy="518.2" r="0.95" fill="#9494b8"/>
<circle cx="449.6" cy="566.6" r="0.95" fill="#9494b8"/>
<circle cx="449.6" cy="615.0" r="0.95" fill="#9494b8"/>
<circle cx="449.6" cy="663.4" r="0.95" fill="#9494b8"/>
<circle cx="449.6" cy="711.8" r="0.95" fill="#9494b8"/>
<circle cx="449.6" cy="760.2" r="0.95" fill="#9494b8"/>
<circle cx="498.0" cy="179.4" r="0.95" fill="#9494b8"/>
<circle cx="498.0" cy="227.8" r="0.95" fill="#9494b8"/>
<circle cx="498.0" cy="276.2" r="0.95" fill="#9494b8"/>
<circle cx="498.0" cy="324.6" r="0.95" fill="#9494b8"/>
<circle cx="498.0" cy="373.0" r="0.95" fill="#9494b8"/>
<circle cx="498.0" cy="421.4" r="0.95" fill="#9494b8"/>
<circle cx="498.0" cy="469.8" r="0.95" fill="#9494b8"/>
<circle cx="498.0" cy="518.2" r="0.95" fill="#9494b8"/>
<circle cx="498.0" cy="566.6" r="0.95" fill="#9494b8"/>
<circle cx="498.0" cy="615.0" r="0.95" fill="#9494b8"/>
<circle cx="498.0" cy="663.4" r="0.95" fill="#9494b8"/>
<circle cx="498.0" cy="711.8" r="0.95" fill="#9494b8"/>
<circle cx="498.0" cy="760.2" r="0.95" fill="#9494b8"/>
<circle cx="546.4" cy="179.4" r="0.95" fill="#9494b8"/>
<circle cx="546.4" cy="227.8" r="0.95" fill="#9494b8"/>
<circle cx="546.4" cy="276.2" r="0.95" fill="#9494b8"/>
<circle cx="546.4" cy="324.6" r="0.95" fill="#9494b8"/>
<circle cx="546.4" cy="373.0" r="0.95" fill="#9494b8"/>
<circle cx="546.4" cy="421.4" r="0.95" fill="#9494b8"/>
<circle cx="546.4" cy="469.8" r="0.95" fill="#9494b8"/>
<circle cx="546.4" cy="518.2" r="0.95" fill="#9494b8"/>
<circle cx="546.4" cy="566.6" r="0.95" fill="#9494b8"/>
<circle cx="546.4" cy="615.0" r="0.95" fill="#9494b8"/>
<circle cx="546.4" cy="663.4" r="0.95" fill="#9494b8"/>
<circle cx="546.4" cy="711.8" r="0.95" fill="#9494b8"/>
<circle cx="546.4" cy="760.2" r="0.95" fill="#9494b8"/>
<circle cx="594.8" cy="179.4" r="0.95" fill="#9494b8"/>
<circle cx="594.8" cy="227.8" r="0.95" fill="#9494b8"/>
<circle cx="594.8" cy="276.2" r="0.95" fill="#9494b8"/>
<circle cx="594.8" cy="324.6" r="0.95" fill="#9494b8"/>
<circle cx="594.8" cy="373.0" r="0.95" fill="#9494b8"/>
<circle cx="594.8" cy="421.4" r="0.95" fill="#9494b8"/>
<circle cx="594.8" cy="469.8" r="0.95" fill="#9494b8"/>
<circle cx="594.8" cy="518.2" r="0.95" fill="#9494b8"/>
<circle cx="594.8" cy="566.6" r="0.95" fill="#9494b8"/>
<circle cx="594.8" cy="615.0" r="0.95" fill="#9494b8"/>
<circle cx="594.8" cy="663.4" r="0.95" fill="#9494b8"/>
<circle cx="594.8" cy="711.8" r="0.95" fill="#9494b8"/>
<circle cx="594.8" cy="760.2" r="0.95" fill="#9494b8"/>
<circle cx="643.2" cy="179.4" r="0.95" fill="#9494b8"/>
<circle cx="643.2" cy="227.8" r="0.95" fill="#9494b8"/>
<circle cx="643.2" cy="276.2" r="0.95" fill="#9494b8"/>
<circle cx="643.2" cy="324.6" r="0.95" fill="#9494b8"/>
<circle cx="643.2" cy="373.0" r="0.95" fill="#9494b8"/>
<circle cx="643.2" cy="421.4" r="0.95" fill="#9494b8"/>
<circle cx="643.2" cy="469.8" r="0.95" fill="#9494b8"/>
<circle cx="643.2" cy="518.2" r="0.95" fill="#9494b8"/>
<circle cx="643.2" cy="566.6" r="0.95" fill="#9494b8"/>
<circle cx="643.2" cy="615.0" r="0.95" fill="#9494b8"/>
<circle cx="643.2" cy="663.4" r="0.95" fill="#9494b8"/>
<circle cx="643.2" cy="711.8" r="0.95" fill="#9494b8"/>
<circle cx="643.2" cy="760.2" r="0.95" fill="#9494b8"/>
<circle cx="691.6" cy="179.4" r="0.95" fill="#9494b8"/>
<circle cx="691.6" cy="227.8" r="0.95" fill="#9494b8"/>
<circle cx="691.6" cy="276.2" r="0.95" fill="#9494b8"/>
<circle cx="691.6" cy="324.6" r="0.95" fill="#9494b8"/>
<circle cx="691.6" cy="373.0" r="0.95" fill="#9494b8"/>
<circle cx="691.6" cy="421.4" r="0.95" fill="#9494b8"/>
<circle cx="691.6" cy="469.8" r="0.95" fill="#9494b8"/>
<circle cx="691.6" cy="518.2" r="0.95" fill="#9494b8"/>
<circle cx="691.6" cy="566.6" r="0.95" fill="#9494b8"/>
<circle cx="691.6" cy="615.0" r="0.95" fill="#9494b8"/>
<circle cx="691.6" cy="663.4" r="0.95" fill="#9494b8"/>
<circle cx="691.6" cy="711.8" r="0.95" fill="#9494b8"/>
<circle cx="691.6" cy="760.2" r="0.95" fill="#9494b8"/>
<circle cx="740.0" cy="179.4" r="0.95" fill="#9494b8"/>
<circle cx="740.0" cy="227.8" r="0.95" fill="#9494b8"/>
<circle cx="740.0" cy="276.2" r="0.95" fill="#9494b8"/>
<circle cx="740.0" cy="324.6" r="0.95" fill="#9494b8"/>
<circle cx="740.0" cy="373.0" r="0.95" fill="#9494b8"/>
<circle cx="740.0" cy="421.4" r="0.95" fill="#9494b8"/>
<circle cx="740.0" cy="469.8" r="0.95" fill="#9494b8"/>
<circle cx="740.0" cy="518.2" r="0.95" fill="#9494b8"/>
<circle cx="740.0" cy="566.6" r="0.95" fill="#9494b8"/>
<circle cx="740.0" cy="615.0" r="0.95" fill="#9494b8"/>
<circle cx="740.0" cy="663.4" r="0.95" fill="#9494b8"/>
<circle cx="740.0" cy="711.8" r="0.95" fill="#9494b8"/>
<circle cx="740.0" cy="760.2" r="0.95" fill="#9494b8"/>
<circle cx="788.4" cy="179.4" r="0.95" fill="#9494b8"/>
<circle cx="788.4" cy="227.8" r="0.95" fill="#9494b8"/>
<circle cx="788.4" cy="276.2" r="0.95" fill="#9494b8"/>
<circle cx="788.4" cy="324.6" r="0.95" fill="#9494b8"/>
<circle cx="788.4" cy="373.0" r="0.95" fill="#9494b8"/>
<circle cx="788.4" cy="421.4" r="0.95" fill="#9494b8"/>
<circle cx="788.4" cy="469.8" r="0.95" fill="#9494b8"/>
<circle cx="788.4" cy="518.2" r="0.95" fill="#9494b8"/>
<circle cx="788.4" cy="566.6" r="0.95" fill="#9494b8"/>
<circle cx="788.4" cy="615.0" r="0.95" fill="#9494b8"/>
<circle cx="788.4" cy="663.4" r="0.95" fill="#9494b8"/>
<circle cx="788.4" cy="711.8" r="0.95" fill="#9494b8"/>
<circle cx="788.4" cy="760.2" r="0.95" fill="#9494b8"/>
<circle cx="836.8" cy="179.4" r="0.95" fill="#9494b8"/>
<circle cx="836.8" cy="227.8" r="0.95" fill="#9494b8"/>
<circle cx="836.8" cy="276.2" r="0.95" fill="#9494b8"/>
<circle cx="836.8" cy="324.6" r="0.95" fill="#9494b8"/>
<circle cx="836.8" cy="373.0" r="0.95" fill="#9494b8"/>
<circle cx="836.8" cy="421.4" r="0.95" fill="#9494b8"/>
<circle cx="836.8" cy="469.8" r="0.95" fill="#9494b8"/>
<circle cx="836.8" cy="518.2" r="0.95" fill="#9494b8"/>
<circle cx="836.8" cy="566.6" r="0.95" fill="#9494b8"/>
<circle cx="836.8" cy="615.0" r="0.95" fill="#9494b8"/>
<circle cx="836.8" cy="663.4" r="0.95" fill="#9494b8"/>
<circle cx="836.8" cy="711.8" r="0.95" fill="#9494b8"/>
<circle cx="836.8" cy="760.2" r="0.95" fill="#9494b8"/>
<circle cx="885.2" cy="179.4" r="0.95" fill="#9494b8"/>
<circle cx="885.2" cy="227.8" r="0.95" fill="#9494b8"/>
<circle cx="885.2" cy="276.2" r="0.95" fill="#9494b8"/>
<circle cx="885.2" cy="324.6" r="0.95" fill="#9494b8"/>
<circle cx="885.2" cy="373.0" r="0.95" fill="#9494b8"/>
<circle cx="885.2" cy="421.4" r="0.95" fill="#9494b8"/>
<circle cx="885.2" cy="469.8" r="0.95" fill="#9494b8"/>
<circle cx="885.2" cy="518.2" r="0.95" fill="#9494b8"/>
<circle cx="885.2" cy="566.6" r="0.95" fill="#9494b8"/>
<circle cx="885.2" cy="615.0" r="0.95" fill="#9494b8"/>
<circle cx="885.2" cy="663.4" r="0.95" fill="#9494b8"/>
<circle cx="885.2" cy="711.8" r="0.95" fill="#9494b8"/>
<circle cx="885.2" cy="760.2" r="0.95" fill="#9494b8"/>
<circle cx="933.6" cy="179.4" r="0.95" fill="#9494b8"/>
<circle cx="933.6" cy="227.8" r="0.95" fill="#9494b8"/>
<circle cx="933.6" cy="276.2" r="0.95" fill="#9494b8"/>
<circle cx="933.6" cy="324.6" r="0.95" fill="#9494b8"/>
<circle cx="933.6" cy="373.0" r="0.95" fill="#9494b8"/>
<circle cx="933.6" cy="421.4" r="0.95" fill="#9494b8"/>
<circle cx="933.6" cy="469.8" r="0.95" fill="#9494b8"/>
<circle cx="933.6" cy="518.2" r="0.95" fill="#9494b8"/>
<circle cx="933.6" cy="566.6" r="0.95" fill="#9494b8"/>
<circle cx="933.6" cy="615.0" r="0.95" fill="#9494b8"/>
<circle cx="933.6" cy="663.4" r="0.95" fill="#9494b8"/>
<circle cx="933.6" cy="711.8" r="0.95" fill="#9494b8"/>
<circle cx="933.6" cy="760.2" r="0.95" fill="#9494b8"/>
<circle cx="982.0" cy="179.4" r="0.95" fill="#9494b8"/>
<circle cx="982.0" cy="227.8" r="0.95" fill="#9494b8"/>
<circle cx="982.0" cy="276.2" r="0.95" fill="#9494b8"/>
<circle cx="982.0" cy="324.6" r="0.95" fill="#9494b8"/>
<circle cx="982.0" cy="373.0" r="0.95" fill="#9494b8"/>
<circle cx="982.0" cy="421.4" r="0.95" fill="#9494b8"/>
<circle cx="982.0" cy="469.8" r="0.95" fill="#9494b8"/>
<circle cx="982.0" cy="518.2" r="0.95" fill="#9494b8"/>
<circle cx="982.0" cy="566.6" r="0.95" fill="#9494b8"/>
<circle cx="982.0" cy="615.0" r="0.95" fill="#9494b8"/>
<circle cx="982.0" cy="663.4" r="0.95" fill="#9494b8"/>
<circle cx="982.0" cy="711.8" r="0.95" fill="#9494b8"/>
<circle cx="982.0" cy="760.2" r="0.95" fill="#9494b8"/>
<circle cx="1030.4" cy="179.4" r="0.95" fill="#9494b8"/>
<circle cx="1030.4" cy="227.8" r="0.95" fill="#9494b8"/>
<circle cx="1030.4" cy="276.2" r="0.95" fill="#9494b8"/>
<circle cx="1030.4" cy="324.6" r="0.95" fill="#9494b8"/>
<circle cx="1030.4" cy="373.0" r="0.95" fill="#9494b8"/>
<circle cx="1030.4" cy="421.4" r="0.95" fill="#9494b8"/>
<circle cx="1030.4" cy="469.8" r="0.95" fill="#9494b8"/>
<circle cx="1030.4" cy="518.2" r="0.95" fill="#9494b8"/>
<circle cx="1030.4" cy="566.6" r="0.95" fill="#9494b8"/>
<circle cx="1030.4" cy="615.0" r="0.95" fill="#9494b8"/>
<circle cx="1030.4" cy="663.4" r="0.95" fill="#9494b8"/>
<circle cx="1030.4" cy="711.8" r="0.95" fill="#9494b8"/>
<circle cx="1030.4" cy="760.2" r="0.95" fill="#9494b8"/>
<circle cx="1078.8" cy="179.4" r="0.95" fill="#9494b8"/>
<circle cx="1078.8" cy="227.8" r="0.95" fill="#9494b8"/>
<circle cx="1078.8" cy="276.2" r="0.95" fill="#9494b8"/>
<circle cx="1078.8" cy="324.6" r="0.95" fill="#9494b8"/>
<circle cx="1078.8" cy="373.0" r="0.95" fill="#9494b8"/>
<circle cx="1078.8" cy="421.4" r="0.95" fill="#9494b8"/>
<circle cx="1078.8" cy="469.8" r="0.95" fill="#9494b8"/>
<circle cx="1078.8" cy="518.2" r="0.95" fill="#9494b8"/>
<circle cx="1078.8" cy="566.6" r="0.95" fill="#9494b8"/>
<circle cx="1078.8" cy="615.0" r="0.95" fill="#9494b8"/>
<circle cx="1078.8" cy="663.4" r="0.95" fill="#9494b8"/>
<circle cx="1078.8" cy="711.8" r="0.95" fill="#9494b8"/>
<circle cx="1078.8" cy="760.2" r="0.95" fill="#9494b8"/>
<circle cx="1127.2" cy="179.4" r="0.95" fill="#9494b8"/>
<circle cx="1127.2" cy="227.8" r="0.95" fill="#9494b8"/>
<circle cx="1127.2" cy="276.2" r="0.95" fill="#9494b8"/>
<circle cx="1127.2" cy="324.6" r="0.95" fill="#9494b8"/>
<circle cx="1127.2" cy="373.0" r="0.95" fill="#9494b8"/>
<circle cx="1127.2" cy="421.4" r="0.95" fill="#9494b8"/>
<circle cx="1127.2" cy="469.8" r="0.95" fill="#9494b8"/>
<circle cx="1127.2" cy="518.2" r="0.95" fill="#9494b8"/>
<circle cx="1127.2" cy="566.6" r="0.95" fill="#9494b8"/>
<circle cx="1127.2" cy="615.0" r="0.95" fill="#9494b8"/>
<circle cx="1127.2" cy="663.4" r="0.95" fill="#9494b8"/>
<circle cx="1127.2" cy="711.8" r="0.95" fill="#9494b8"/>
<circle cx="1127.2" cy="760.2" r="0.95" fill="#9494b8"/>
<circle cx="1175.6" cy="179.4" r="0.95" fill="#9494b8"/>
<circle cx="1175.6" cy="227.8" r="0.95" fill="#9494b8"/>
<circle cx="1175.6" cy="276.2" r="0.95" fill="#9494b8"/>
<circle cx="1175.6" cy="324.6" r="0.95" fill="#9494b8"/>
<circle cx="1175.6" cy="373.0" r="0.95" fill="#9494b8"/>
<circle cx="1175.6" cy="421.4" r="0.95" fill="#9494b8"/>
<circle cx="1175.6" cy="469.8" r="0.95" fill="#9494b8"/>
<circle cx="1175.6" cy="518.2" r="0.95" fill="#9494b8"/>
<circle cx="1175.6" cy="566.6" r="0.95" fill="#9494b8"/>
<circle cx="1175.6" cy="615.0" r="0.95" fill="#9494b8"/>
<circle cx="1175.6" cy="663.4" r="0.95" fill="#9494b8"/>
<circle cx="1175.6" cy="711.8" r="0.95" fill="#9494b8"/>
<circle cx="1175.6" cy="760.2" r="0.95" fill="#9494b8"/>
<circle cx="1224.0" cy="179.4" r="0.95" fill="#9494b8"/>
<circle cx="1224.0" cy="227.8" r="0.95" fill="#9494b8"/>
<circle cx="1224.0" cy="276.2" r="0.95" fill="#9494b8"/>
<circle cx="1224.0" cy="324.6" r="0.95" fill="#9494b8"/>
<circle cx="1224.0" cy="373.0" r="0.95" fill="#9494b8"/>
<circle cx="1224.0" cy="421.4" r="0.95" fill="#9494b8"/>
<circle cx="1224.0" cy="469.8" r="0.95" fill="#9494b8"/>
<circle cx="1224.0" cy="518.2" r="0.95" fill="#9494b8"/>
<circle cx="1224.0" cy="566.6" r="0.95" fill="#9494b8"/>
<circle cx="1224.0" cy="615.0" r="0.95" fill="#9494b8"/>
<circle cx="1224.0" cy="663.4" r="0.95" fill="#9494b8"/>
<circle cx="1224.0" cy="711.8" r="0.95" fill="#9494b8"/>
<circle cx="1224.0" cy="760.2" r="0.95" fill="#9494b8"/>
<circle cx="1272.4" cy="179.4" r="0.95" fill="#9494b8"/>
<circle cx="1272.4" cy="227.8" r="0.95" fill="#9494b8"/>
<circle cx="1272.4" cy="276.2" r="0.95" fill="#9494b8"/>
<circle cx="1272.4" cy="324.6" r="0.95" fill="#9494b8"/>
<circle cx="1272.4" cy="373.0" r="0.95" fill="#9494b8"/>
<circle cx="1272.4" cy="421.4" r="0.95" fill="#9494b8"/>
<circle cx="1272.4" cy="469.8" r="0.95" fill="#9494b8"/>
<circle cx="1272.4" cy="518.2" r="0.95" fill="#9494b8"/>
<circle cx="1272.4" cy="566.6" r="0.95" fill="#9494b8"/>
<circle cx="1272.4" cy="615.0" r="0.95" fill="#9494b8"/>
<circle cx="1272.4" cy="663.4" r="0.95" fill="#9494b8"/>
<circle cx="1272.4" cy="711.8" r="0.95" fill="#9494b8"/>
<circle cx="1272.4" cy="760.2" r="0.95" fill="#9494b8"/>
<rect x="811" y="252" width="2" height="87" fill="#2e8ec4" />
<rect x="811" y="505" width="2" height="87" fill="#2e8ec4" />
<rect x="642" y="421" width="64" height="2" fill="#2e8ec4" />
<rect x="823" y="421" width="183" height="2" fill="#2e8ec4" />
<path d="M726 422 H739.5" fill="none" stroke="#08bc64" stroke-width="1.4"/>
<circle cx="752" cy="421.3" r="12.5" fill="none" stroke="#08bc64" stroke-width="1.4"/>
<path d="M764.7 385 V458.6" fill="none" stroke="#08bc64" stroke-width="1.4"/>
<path d="M775.8 458 V385.8 H812 V359 M775.8 422 H803 M775.8 458 H812 V484" fill="none" stroke="#08bc64" stroke-width="2"/>
<path d="M776.5 385.5 L788.3 377.7 V392.8 Z" fill="none" stroke="#08bc64" stroke-width="1.4"/>
<rect x="802.7" y="338.8" width="20.2" height="20.1" fill="#ff0000" />
<rect x="705" y="411" width="21.5" height="21.5" fill="#ff0000" />
<rect x="802.7" y="411.2" width="20.1" height="21.3" fill="#ff0000" />
<rect x="803" y="484" width="20" height="21" fill="#ff0000" />
<path d="M812 180 L834 201.5 L834 231 L812 252 L790 231 L790 201.5 Z" fill="#ff0000"/>
<path d="M812 592 L834 613 L834 642.5 L812 663.5 L790 642.5 L790 613 Z" fill="#ff0000"/>
<path d="M570 422 L591 398.5 L621 398.5 L642.5 422 L621 442.6 L591 442.6 Z" fill="#ff0000"/>
<path d="M1005.5 422 L1027.5 398.5 L1056.5 398.5 L1078.3 422 L1056.5 442.6 L1027.5 442.6 Z" fill="#ff0000"/>
<ellipse cx="884.6" cy="422" rx="0.9" ry="1.8" fill="#d8eefa"/>
<path d="M498.5 420.5 V423.5 M497 422 H500" stroke="#ffffff" stroke-width="1.4"/>
<path d="M1272.5 420.5 V423.5 M1271 422 H1274" stroke="#ffffff" stroke-width="1.4"/>
<path d="M759.09 330.27 L758.72 332.09 L757.67 333.73 L756.02 335.03 L753.95 335.86 L751.65 336.15 L749.35 335.86 L747.28 335.03 L745.63 333.73 L744.58 332.09 L744.21 330.27 L744.58 328.46 L745.63 326.82 L747.28 325.52 L749.35 324.69 L751.65 324.40 L753.95 324.69 L756.02 325.52 L757.67 326.82 L758.72 328.46 L759.09 330.27 M760.30 342.40 L759.88 344.56 L758.65 346.51 L756.73 348.06 L754.32 349.06 L751.65 349.40 L748.98 349.06 L746.57 348.06 L744.65 346.51 L743.42 344.56 L743.00 342.40 L743.42 340.24 L744.65 338.29 L746.57 336.74 L748.98 335.74 L751.65 335.40 L754.32 335.74 L756.73 336.74 L758.65 338.29 L759.88 340.24 L760.30 342.40 M782.30 336.90 L782.01 340.14 L781.17 343.15 L779.84 345.74 L778.10 347.73 L776.07 348.97 L773.90 349.40 L771.73 348.97 L769.70 347.73 L767.96 345.74 L766.63 343.15 L765.79 340.14 L765.50 336.90 L765.79 333.66 L766.63 330.65 L767.96 328.06 L769.70 326.07 L771.73 324.83 L773.90 324.40 L776.07 324.83 L778.10 326.07 L779.84 328.06 L781.17 330.65 L782.01 333.66 L782.30 336.90 M782.30 324.40 L765.50 349.40" fill="none" stroke="#ff0000" stroke-width="1.5" stroke-linejoin="round" stroke-linecap="round"/>
<path d="M828.30 373.20 L828.30 354.10 L838.83 354.10 L841.80 356.58 L841.80 361.17 L838.83 363.65 L828.30 363.65 M860.20 363.65 L859.96 366.12 L859.28 368.43 L858.18 370.40 L856.75 371.92 L855.09 372.87 L853.30 373.20 L851.51 372.87 L849.85 371.92 L848.42 370.40 L847.32 368.43 L846.64 366.12 L846.40 363.65 L846.64 361.18 L847.32 358.88 L848.42 356.90 L849.85 355.38 L851.51 354.43 L853.30 354.10 L855.09 354.43 L856.75 355.38 L858.18 356.90 L859.28 358.88 L859.96 361.18 L860.20 363.65 M860.20 354.10 L846.40 373.20" fill="none" stroke="#ff0000" stroke-width="1.3" stroke-linejoin="round" stroke-linecap="round"/>
<path d="M795.00 357.33 L792.10 354.00 L783.69 354.00 L780.50 357.33 L780.50 360.47 L783.40 363.41 L792.10 364.19 L795.00 367.13 L795.00 370.27 L792.10 373.60 L783.40 373.60 L780.50 370.27" fill="none" stroke="#e0d0ac" stroke-width="1.3" stroke-linejoin="round" stroke-linecap="round"/>
<path d="M747.60 391.15 L744.34 387.60 L736.50 387.60 L732.80 392.53 L732.80 402.38 L736.50 407.30 L743.90 407.30 L747.60 402.97 L747.60 398.44 L740.94 398.44" fill="none" stroke="#e0d0ac" stroke-width="1.3" stroke-linejoin="round" stroke-linecap="round"/>
<path d="M786.90 386.40 L786.90 404.60 L797.35 404.60 L800.30 401.87 L800.30 398.23 L797.35 395.50 L786.90 395.50 M796.82 395.50 L799.23 393.13 L799.23 388.77 L796.82 386.40 L786.90 386.40" fill="none" stroke="#e0d0ac" stroke-width="1.3" stroke-linejoin="round" stroke-linecap="round"/>
<path d="M781.60 471.40 L781.60 492.30 L788.86 492.30 L792.82 489.17 L794.80 484.36 L794.80 479.34 L792.82 474.53 L788.86 471.40 L781.60 471.40" fill="none" stroke="#e0d0ac" stroke-width="1.3" stroke-linejoin="round" stroke-linecap="round"/>
<path d="M835.00 398.90 L835.00 409.30 M835.00 401.19 L832.65 398.90 L828.95 398.90 L826.60 402.02 L826.60 406.39 L828.95 409.30 L832.65 409.30 L835.00 407.01 M840.70 409.30 L840.70 398.90 L854.25 398.90 L856.10 399.94 L856.10 409.30 M848.40 398.90 L848.40 409.30 M876.80 402.00 L876.61 403.89 L876.05 405.65 L875.16 407.16 L874.00 408.32 L872.65 409.05 L871.20 409.30 L869.75 409.05 L868.40 408.32 L867.24 407.16 L866.35 405.65 L865.79 403.89 L865.60 402.00 L865.79 400.11 L866.35 398.35 L867.24 396.84 L868.40 395.68 L869.75 394.95 L871.20 394.70 L872.65 394.95 L874.00 395.68 L875.16 396.84 L876.05 398.35 L876.61 400.11 L876.80 402.00 M876.80 394.70 L865.60 409.30 M889.62 395.87 L887.41 394.70 L883.38 394.70 L880.50 399.08 L880.50 406.09 L882.61 409.30 L887.99 409.30 L890.10 406.38 L890.10 403.75 L887.99 401.27 L882.61 401.27 L880.50 403.75 M894.20 409.30 L894.20 394.70 L902.31 394.70 L904.60 396.60 L904.60 400.10 L902.31 402.00 L894.20 402.00" fill="none" stroke="#e8840a" stroke-width="1.3" stroke-linejoin="round" stroke-linecap="round"/>
<path d="M860.9 399 V409.3 M860.9 394.7 V396" stroke="#e8840a" stroke-width="1.3" stroke-linecap="round"/>
<path d="M826.60 433.00 L830.60 446.10 L834.60 433.65 L838.60 446.10 L842.60 433.00 M874.60 430.81 L876.89 428.85 L879.70 426.50 L879.70 446.10 M887.20 430.42 L889.82 426.50 L897.68 426.50 L900.30 430.42 L900.30 434.73 L897.68 437.87 L887.20 446.10 L900.30 446.10 M906.90 444.14 L906.90 446.10 M928.40 436.30 L928.16 438.84 L927.47 441.20 L926.36 443.23 L924.92 444.79 L923.25 445.77 L921.45 446.10 L919.65 445.77 L917.98 444.79 L916.54 443.23 L915.43 441.20 L914.74 438.84 L914.50 436.30 L914.74 433.76 L915.43 431.40 L916.54 429.37 L917.98 427.81 L919.65 426.83 L921.45 426.50 L923.25 426.83 L924.92 427.81 L926.36 429.37 L927.47 431.40 L928.16 433.76 L928.40 436.30 M928.40 426.50 L914.50 446.10 M934.40 433.00 L934.40 443.48 L936.82 446.10 L942.98 446.10 L945.40 443.48 M945.40 433.00 L945.40 446.10" fill="none" stroke="#e8840a" stroke-width="1.3" stroke-linejoin="round" stroke-linecap="round"/>
<path d="M848 434.3 H865 M848 440.8 H865" stroke="#e8840a" stroke-width="1.4"/>
<path d="M828.40 462.90 L828.40 482.00 M871.85 464.43 L868.83 462.90 L863.33 462.90 L859.40 468.63 L859.40 477.80 L862.28 482.00 L869.62 482.00 L872.50 478.18 L872.50 474.74 L869.62 471.50 L862.28 471.50 L859.40 474.74 M889.90 472.45 L889.68 474.92 L889.02 477.23 L887.98 479.20 L886.62 480.72 L885.05 481.67 L883.35 482.00 L881.65 481.67 L880.07 480.72 L878.72 479.20 L877.68 477.23 L877.02 474.92 L876.80 472.45 L877.02 469.98 L877.68 467.67 L878.72 465.70 L880.07 464.18 L881.65 463.23 L883.35 462.90 L885.05 463.23 L886.62 464.18 L887.98 465.70 L889.02 467.67 L889.68 469.98 L889.90 472.45 M889.90 462.90 L876.80 482.00 M908.90 472.45 L908.68 474.92 L908.03 477.23 L907.00 479.20 L905.65 480.72 L904.08 481.67 L902.40 482.00 L900.72 481.67 L899.15 480.72 L897.80 479.20 L896.77 477.23 L896.12 474.92 L895.90 472.45 L896.12 469.98 L896.77 467.67 L897.80 465.70 L899.15 464.18 L900.72 463.23 L902.40 462.90 L904.08 463.23 L905.65 464.18 L907.00 465.70 L908.03 467.67 L908.68 469.98 L908.90 472.45 M908.90 462.90 L895.90 482.00 M914.50 469.00 L914.50 482.00 M914.50 471.60 L917.23 469.00 L923.00 469.00 L925.40 471.60 L925.40 482.00" fill="none" stroke="#e8840a" stroke-width="1.3" stroke-linejoin="round" stroke-linecap="round"/>
<path d="M835.5 470.7 H852.7 M835.5 476.8 H852.7" stroke="#e8840a" stroke-width="1.5"/>
<path d="M826.40 510.90 L826.40 501.30 L840.66 501.30 L842.60 502.26 L842.60 510.90 M834.50 501.30 L834.50 510.90 M849.05 501.78 L849.05 503.22 M849.05 509.17 L849.05 510.90 M855.20 499.75 L857.23 498.32 L859.70 496.60 L859.70 510.90" fill="none" stroke="#e8840a" stroke-width="1.3" stroke-linejoin="round" stroke-linecap="round"/>
<path d="M604.00 462.29 L599.89 457.90 L589.97 457.90 L585.30 464.00 L585.30 476.20 L589.97 482.30 L599.33 482.30 L604.00 476.93 L604.00 471.32 L595.59 471.32" fill="none" stroke="#ff0000" stroke-width="1.3" stroke-linejoin="round" stroke-linecap="round"/>
<path d="M1022.80 457.90 L1022.80 482.30 L1036.29 482.30 L1040.10 478.64 L1040.10 473.76 L1036.29 470.10 L1022.80 470.10 M1035.60 470.10 L1038.72 466.93 L1038.72 461.07 L1035.60 457.90 L1022.80 457.90" fill="none" stroke="#ff0000" stroke-width="1.3" stroke-linejoin="round" stroke-linecap="round"/>
<path d="M852.49 197.00 L848.10 200.50 L848.10 210.65 L852.49 214.50 L856.61 214.50 L860.48 211.00 L861.52 200.50 L865.39 197.00 L869.51 197.00 L873.90 200.50 L873.90 211.00 L869.51 214.50" fill="none" stroke="#ff0000" stroke-width="1.3" stroke-linejoin="round" stroke-linecap="round"/>
<path d="M800.40 698.60 L825.90 698.60 L825.90 688.98 L822.07 683.73 L816.21 681.10 L810.09 681.10 L804.23 683.73 L800.40 688.98 L800.40 698.60" fill="none" stroke="#ff0000" stroke-width="1.3" stroke-linejoin="round" stroke-linecap="round"/>
<rect x="199" y="827.5" width="1123" height="17" fill="url(#status)"/>
<rect x="199" y="827" width="1123" height="1" fill="#ffffff" />
<rect x="208.0" y="836" width="0.9" height="8" fill="#7a7a7a" />
<rect x="210.5" y="836" width="0.9" height="8" fill="#7a7a7a" />
<rect x="213.0" y="836" width="0.9" height="8" fill="#7a7a7a" />
<text x="217.4" y="847" font-size="15.3" fill="#4a4a4a" font-weight="normal" font-family='"Liberation Sans", sans-serif' >mouse L: showClickInfo()</text>
<text x="681" y="847" font-size="15.3" fill="#4a4a4a" font-weight="normal" font-family='"Liberation Sans", sans-serif' >M: schHiMousePopUp()</text>
<text x="1149" y="847" font-size="15.3" fill="#4a4a4a" font-weight="normal" font-family='"Liberation Sans", sans-serif' >R: schHiMousePopUp()</text>
<rect x="1322" y="826" width="2" height="18" fill="#c8c8c8" />
</svg></body></html>
